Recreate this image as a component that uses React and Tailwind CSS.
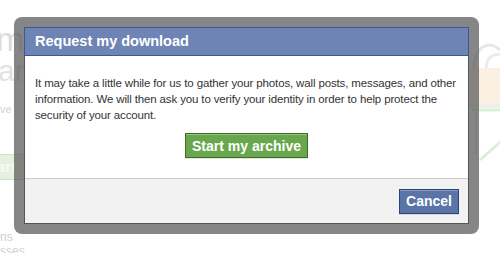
export default function App() {
  return (
    <div className="relative w-[500px] h-[253px] overflow-hidden bg-white font-['Liberation_Sans',Tahoma,sans-serif]">
      {/* page behind the dialog */}
      <div className="flex flex-col pt-[22px] text-[#dcdcdc]">
        <div className="-ml-[4px] text-[34px] leading-[34px]">ma</div>
        <div className="-ml-[2px] text-[30px] leading-[30px] text-[#e2e2e2]">ar</div>
        <div className="mt-[16px] text-[11px] leading-[14px] text-[#d4d4d4]">ve</div>
        <div className="mt-[38px] flex h-[26px] w-[60px] items-center -ml-[6px] border border-[#cfe2c4] bg-[#e6f0df] pl-[2px] text-[15px] font-bold text-[#f5f9f2]">
          art
        </div>
        <div className="mt-[50px] text-[12px] leading-[14px] text-[#d0d0d0]">ns</div>
        <div className="text-[12px] leading-[14px] text-[#d0d0d0]">sses</div>
      </div>
      <svg className="absolute left-[470px] top-[25px]" width="40" height="140" viewBox="0 0 40 140">
        <path d="M4 45 C4 20 20 15 30 25" fill="none" stroke="#e6e6e6" strokeWidth="3" />
        <path d="M16 45 C16 28 30 25 40 35" fill="none" stroke="#ececec" strokeWidth="3" />
        <rect x="0" y="43" width="40" height="36" fill="#fbf1e3" />
        <rect x="0" y="79" width="40" height="4" fill="#eeeeee" />
        <path d="M2 85 L38 85 L38 110 L10 135" fill="none" stroke="#dcefd6" strokeWidth="3" />
        <path d="M6 88 L6 130" fill="none" stroke="#e3f2de" strokeWidth="3" />
      </svg>

      {/* dialog */}
      <div className="absolute left-[14px] top-[17px] w-[465px] rounded-[8px] bg-[rgba(82,82,82,0.7)] p-[10px]">
        <div className="flex flex-col border border-[#555] bg-white">
          <div className="-mx-px -mt-px border border-[#3b5998] bg-[#6d84b4] px-[10px] pt-[4px] pb-[5px] text-[14.5px] font-bold leading-[18px] text-white">
            Request my download
          </div>
          <div className="flex flex-col px-[10px] pt-[19px] pb-[20px] text-[11.5px] leading-[16px] tracking-[-0.14px] text-[#333]">
            <p>
              It may take a little while for us to gather your photos, wall posts, messages, and other information. We will then ask you to verify your identity in order to help protect the security of your account.
            </p>
            <div className="mt-[10px] flex justify-center">
              <button className="h-[25px] border border-[#3b6e22] bg-[#69a74e] px-[6px] text-[14px] font-bold tracking-normal text-white shadow-[inset_0_1px_0_#98c37d,0_1px_0_rgba(0,0,0,0.1)]">
                Start my archive
              </button>
            </div>
          </div>
          <div className="flex justify-end border-t border-[#ccc] bg-[#f2f2f2] px-[9px] pt-[10px] pb-[9px]">
            <button className="h-[25px] border border-[#29447e] bg-[#5b74a8] px-[6px] text-[14px] font-bold text-white shadow-[inset_0_1px_0_#8a9cc2,0_1px_0_rgba(0,0,0,0.1)]">
              Cancel
            </button>
          </div>
        </div>
      </div>
    </div>
  );
}
